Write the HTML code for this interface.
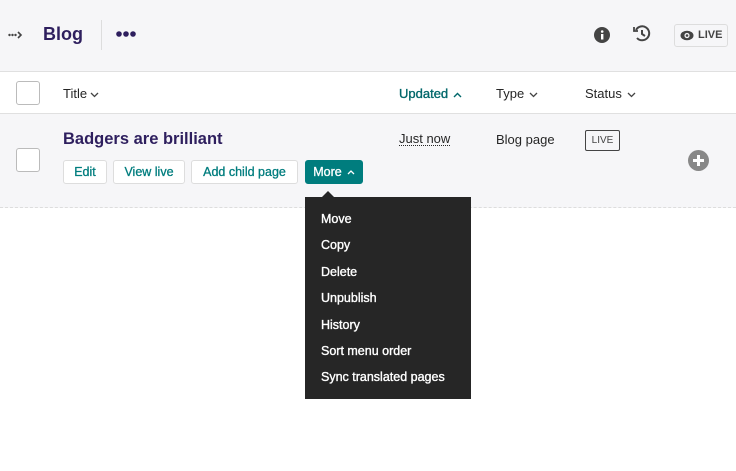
<!DOCTYPE html>
<html><head><meta charset="utf-8"><style>
*{box-sizing:border-box;margin:0;padding:0}
body{width:736px;height:471px;overflow:hidden;background:#fff;font-family:"Liberation Sans",Arial,sans-serif;position:relative;color:#262626}
.abs{position:absolute}
.hdr{left:0;top:0;width:736px;height:72px;background:#f6f6f8;border-bottom:1px solid #e0e0e0}
.colh{left:0;top:73px;width:736px;height:41px;background:#fff;border-bottom:1px solid #e0e0e0}
.row{left:0;top:114px;width:736px;height:94px;background:#f6f6f8;border-bottom:1px dashed #ddd}
.cb{width:24px;height:24px;border:1px solid #bbb;border-radius:3px;background:#fff}
.t{font-size:13px;white-space:nowrap}
.btn{top:160px;height:24px;border:1px solid #ddd;border-radius:3px;background:#fff;color:#007d7e;font-size:12.5px;line-height:22px;text-align:center;-webkit-text-stroke:0.3px}
.menu{left:305px;top:197px;width:166px;height:202px;background:#262626}
.menu div{position:absolute;left:16px;color:#fff;font-size:12.5px;-webkit-text-stroke:0.35px}
svg.ch{display:inline-block;vertical-align:middle;margin-left:3px}
</style></head><body>
<div class="abs hdr"></div>
<svg class="abs" style="left:8px;top:30px" width="16" height="10" viewBox="0 0 16 10"><circle cx="1.5" cy="5" r="1.2" fill="#444"/><circle cx="4.5" cy="5" r="1.2" fill="#444"/><circle cx="7.5" cy="5" r="1.2" fill="#444"/><path d="M10 2l3 3-3 3" stroke="#444" stroke-width="1.6" fill="none"/></svg>
<div class="abs" style="left:43px;top:24px;font-size:18px;font-weight:bold;color:#2e1f5e">Blog</div>
<div class="abs" style="left:101px;top:20px;width:1px;height:30px;background:#ddd"></div>
<svg class="abs" style="left:116px;top:29px" width="20" height="10" viewBox="0 0 20 10"><circle cx="3" cy="5" r="2.8" fill="#2e1f5e"/><circle cx="10" cy="5" r="2.8" fill="#2e1f5e"/><circle cx="17" cy="5" r="2.8" fill="#2e1f5e"/></svg>
<svg class="abs" style="left:594px;top:27px" width="16" height="16" viewBox="0 0 16 16"><circle cx="8" cy="8" r="8" fill="#444"/><rect x="7" y="7" width="2.4" height="5.5" fill="#fff"/><circle cx="8.2" cy="4.5" r="1.3" fill="#fff"/></svg>
<svg class="abs" style="left:633px;top:25px" width="18" height="18" viewBox="0 0 18 18" fill="none" stroke="#444" stroke-width="2"><path d="M3 5A7 7 0 1 1 4 13"/><path d="M1 2v4h4" stroke-width="1.8"/><path d="M9 5v4l3 2"/></svg>
<div class="abs" style="left:674px;top:24px;width:54px;height:23px;border:1px solid #ddd;border-radius:3px;background:#f6f6f8"></div>
<svg class="abs" style="left:680px;top:30px" width="14" height="11" viewBox="0 0 14 11"><ellipse cx="7" cy="5.5" rx="6.5" ry="4.8" fill="#444"/><circle cx="7" cy="5.5" r="2.6" fill="#f6f6f8"/><circle cx="7" cy="5.5" r="1.3" fill="#444"/></svg>
<div class="abs t" style="left:698px;top:29px;font-size:11px;font-weight:bold;color:#444">LIVE</div>

<div class="abs colh"></div>
<div class="abs cb" style="left:16px;top:81px"></div>
<div class="abs t" style="left:63px;top:86px">Title<svg class="ch" width="9" height="6" viewBox="0 0 9 6"><path d="M1 1l3.5 3.5L8 1" stroke="#444" stroke-width="1.3" fill="none"/></svg></div>
<div class="abs t" style="left:399px;top:86px;color:#00676a;-webkit-text-stroke:0.35px">Updated<svg class="ch" width="9" height="6" viewBox="0 0 9 6" style="margin-left:5px"><path d="M1 5l3.5-3.5L8 5" stroke="#00676a" stroke-width="1.4" fill="none"/></svg></div>
<div class="abs t" style="left:496px;top:86px">Type<svg class="ch" width="9" height="6" viewBox="0 0 9 6" style="margin-left:5px"><path d="M1 1l3.5 3.5L8 1" stroke="#444" stroke-width="1.3" fill="none"/></svg></div>
<div class="abs t" style="left:585px;top:86px">Status<svg class="ch" width="9" height="6" viewBox="0 0 9 6" style="margin-left:5px"><path d="M1 1l3.5 3.5L8 1" stroke="#444" stroke-width="1.3" fill="none"/></svg></div>

<div class="abs row"></div>
<div class="abs cb" style="left:16px;top:148px"></div>
<div class="abs" style="left:63px;top:130px;font-size:16.5px;font-weight:bold;color:#2e1f5e">Badgers are brilliant</div>
<div class="abs btn" style="left:63px;width:44px">Edit</div>
<div class="abs btn" style="left:113px;width:72px">View live</div>
<div class="abs btn" style="left:191px;width:107px">Add child page</div>
<div class="abs btn" style="left:305px;width:58px;background:#007d7e;border-color:#007d7e;color:#fff">More<svg class="ch" width="8" height="6" viewBox="0 0 8 6" style="margin-left:5px;margin-top:-2px"><path d="M1 5l3-3 3 3" stroke="#fff" stroke-width="1.3" fill="none"/></svg></div>
<div class="abs t" style="left:399px;top:132px;border-bottom:1px dotted #262626;line-height:13px">Just now</div>
<div class="abs t" style="left:496px;top:132px">Blog page</div>
<div class="abs" style="left:585px;top:130px;width:35px;height:21px;border:1px solid #444;border-radius:2px;font-size:10px;line-height:19px;text-align:center;color:#444">LIVE</div>
<svg class="abs" style="left:688px;top:150px" width="21" height="21" viewBox="0 0 21 21"><circle cx="10.5" cy="10.5" r="10.5" fill="#888"/><path d="M10.5 5v11M5 10.5h11" stroke="#fff" stroke-width="3"/></svg>

<div class="abs" style="left:322px;top:191px;width:0;height:0;border-left:6px solid transparent;border-right:6px solid transparent;border-bottom:6px solid #262626"></div>
<div class="abs menu">
<div style="top:15px">Move</div>
<div style="top:41px">Copy</div>
<div style="top:68px">Delete</div>
<div style="top:94px">Unpublish</div>
<div style="top:121px">History</div>
<div style="top:147px">Sort menu order</div>
<div style="top:173px">Sync translated pages</div>
</div>
</body></html>
